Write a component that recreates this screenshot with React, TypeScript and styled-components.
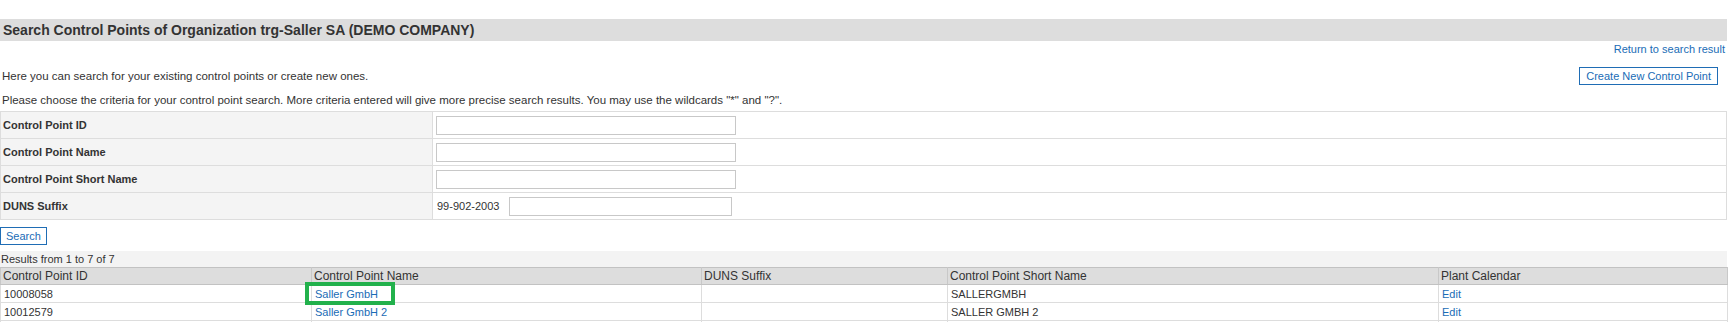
import React from "react";
import styled, { createGlobalStyle } from "styled-components";

type ControlPoint = {
  id: string;
  name: string;
  duns: string;
  shortName: string;
};

const CONTROL_POINTS: ControlPoint[] = [
  { id: "10008058", name: "Saller GmbH", duns: "", shortName: "SALLERGMBH" },
  { id: "10012579", name: "Saller GmbH 2", duns: "", shortName: "SALLER GMBH 2" },
  { id: "10012580", name: "Saller Logistik", duns: "", shortName: "SALLER LOG" },
  { id: "10012581", name: "Saller Werk Nord", duns: "", shortName: "SALLER NORD" },
  { id: "10012582", name: "Saller Werk Süd", duns: "", shortName: "SALLER SUED" },
  { id: "10012583", name: "Saller Lager", duns: "", shortName: "SALLER LAGER" },
  { id: "10012584", name: "Saller Service", duns: "", shortName: "SALLER SERVICE" },
];

const COLUMNS = [
  { label: "Control Point ID", width: 311 },
  { label: "Control Point Name", width: 390 },
  { label: "DUNS Suffix", width: 246 },
  { label: "Control Point Short Name", width: 491 },
  { label: "Plant Calendar", width: 289 },
];

const GlobalStyle = createGlobalStyle`
  body {
    margin: 0;
    background: #ffffff;
    font-family: "Liberation Sans", Arial, sans-serif;
    color: #333333;
  }
`;

const App: React.FC = () => {
  return (
    <>
      <GlobalStyle />
      <Page>
        <TitleBar>Search Control Points of Organization trg-Saller SA (DEMO COMPANY)</TitleBar>

        <ReturnRow>
          <TextLink href="#">Return to search result</TextLink>
        </ReturnRow>

        <IntroRow>
          <Text>Here you can search for your existing control points or create new ones.</Text>
          <OutlineButton type="button">Create New Control Point</OutlineButton>
        </IntroRow>

        <Hint>
          Please choose the criteria for your control point search. More criteria entered will give more
          precise search results. You may use the wildcards "*" and "?".
        </Hint>

        <CriteriaTable>
          <tbody>
            <CriteriaRow>
              <LabelCell>Control Point ID</LabelCell>
              <ValueCell><TextInput /></ValueCell>
            </CriteriaRow>
            <CriteriaRow>
              <LabelCell>Control Point Name</LabelCell>
              <ValueCell><TextInput /></ValueCell>
            </CriteriaRow>
            <CriteriaRow>
              <LabelCell>Control Point Short Name</LabelCell>
              <ValueCell><TextInput /></ValueCell>
            </CriteriaRow>
            <CriteriaRow>
              <LabelCell>DUNS Suffix</LabelCell>
              <ValueCell>
                <DunsField>
                  <DunsPrefix>99-902-2003</DunsPrefix>
                  <TextInput $width={223} />
                </DunsField>
              </ValueCell>
            </CriteriaRow>
          </tbody>
        </CriteriaTable>

        <SearchRow>
          <OutlineButton type="button" $compact>Search</OutlineButton>
        </SearchRow>

        <ResultsCaption>Results from 1 to 7 of 7</ResultsCaption>

        <ResultsTable>
          <colgroup>
            {COLUMNS.map((col) => (
              <col key={col.label} style={{ width: col.width }} />
            ))}
          </colgroup>
          <thead>
            <tr>
              {COLUMNS.map((col) => (
                <HeadCell key={col.label}>{col.label}</HeadCell>
              ))}
            </tr>
          </thead>
          <tbody>
            {CONTROL_POINTS.map((cp, i) => (
              <tr key={cp.id}>
                <DataCell>{cp.id}</DataCell>
                <DataCell>
                  <NameWrap>
                    <TextLink href="#">{cp.name}</TextLink>
                    {i === 0 && <Highlight />}
                  </NameWrap>
                </DataCell>
                <DataCell>{cp.duns}</DataCell>
                <DataCell>{cp.shortName}</DataCell>
                <DataCell>
                  <TextLink href="#">Edit</TextLink>
                </DataCell>
              </tr>
            ))}
          </tbody>
        </ResultsTable>
      </Page>
    </>
  );
};

export default App;

const Page = styled.div`
  width: 1727px;
  padding-top: 19px;
  font-size: 11px;
`;

const TitleBar = styled.div`
  height: 22px;
  line-height: 22px;
  padding-left: 3px;
  background: #dddddd;
  font-size: 14px;
  font-weight: bold;
  color: #333333;
`;

const ReturnRow = styled.div`
  display: flex;
  justify-content: flex-end;
  margin-top: 2px;
  padding-right: 2px;
  line-height: 13px;
`;

const TextLink = styled.a`
  color: #1a6cb6;
  text-decoration: none;
  font-size: 11px;
`;

const IntroRow = styled.div`
  display: flex;
  align-items: center;
  justify-content: space-between;
  margin-top: 11px;
  padding: 0 9px 0 2px;
`;

const Text = styled.span`
  font-size: 11.5px;
  line-height: 13px;
  color: #333333;
`;

const DunsPrefix = styled.span`
  font-size: 11px;
  line-height: 13px;
  color: #333333;
`;

const OutlineButton = styled.button<{ $compact?: boolean }>`
  height: 18px;
  padding: 0 ${({ $compact }) => ($compact ? 5 : 6)}px;
  border: 1px solid #1f6db5;
  background: #ffffff;
  color: #1a6cb6;
  font-family: "Liberation Sans", Arial, sans-serif;
  font-size: 11px;
  line-height: 16px;
  cursor: pointer;
`;

const Hint = styled.div`
  margin-top: 9px;
  padding-left: 2px;
  font-size: 11.5px;
  line-height: 13px;
`;

const CriteriaTable = styled.table`
  width: 100%;
  margin-top: 4px;
  border-collapse: collapse;
  border: 1px solid #dddddd;
`;

const CriteriaRow = styled.tr`
  height: 27px;
`;

const LabelCell = styled.td`
  width: 429px;
  padding: 0 0 0 2px;
  background: #f4f4f4;
  border: 1px solid #dddddd;
  font-weight: bold;
  font-size: 11px;
  color: #333333;
`;

const ValueCell = styled.td`
  padding: 0 0 0 3px;
  border: 1px solid #dddddd;
`;

const DunsField = styled.div`
  display: flex;
  align-items: center;
  gap: 10px;
  padding-left: 1px;
`;

const TextInput = styled.input<{ $width?: number }>`
  display: block;
  box-sizing: border-box;
  width: ${({ $width }) => $width ?? 300}px;
  height: 19px;
  border: 1px solid #c8c8c8;
  margin: 0;
  padding: 0 2px;
  background: #ffffff;
  outline: none;
`;

const SearchRow = styled.div`
  display: flex;
  margin-top: 7px;
`;

const ResultsCaption = styled.div`
  margin-top: 6px;
  height: 16px;
  line-height: 16px;
  padding-left: 1px;
  background: #f3f3f3;
`;

const ResultsTable = styled.table`
  width: 100%;
  table-layout: fixed;
  border-collapse: collapse;
`;

const HeadCell = styled.th`
  height: 16px;
  padding: 0 0 0 2px;
  background: #dddddd;
  border-top: 1px solid #c2c2c2;
  border-bottom: 1px solid #c2c2c2;
  border-left: 1px solid #c8c8c8;
  border-right: 1px solid #c8c8c8;
  text-align: left;
  font-weight: normal;
  font-size: 12px;
  color: #333333;
  white-space: nowrap;
`;

const DataCell = styled.td`
  height: 17px;
  padding: 0 0 0 3px;
  border: 1px solid #dddddd;
  font-size: 11px;
  color: #333333;
  white-space: nowrap;
`;

const NameWrap = styled.span`
  position: relative;
  display: inline-block;
`;

const Highlight = styled.span`
  position: absolute;
  left: -10px;
  top: -6px;
  width: 90px;
  height: 23px;
  box-sizing: border-box;
  border: 4px solid #22b14c;
  pointer-events: none;
`;
